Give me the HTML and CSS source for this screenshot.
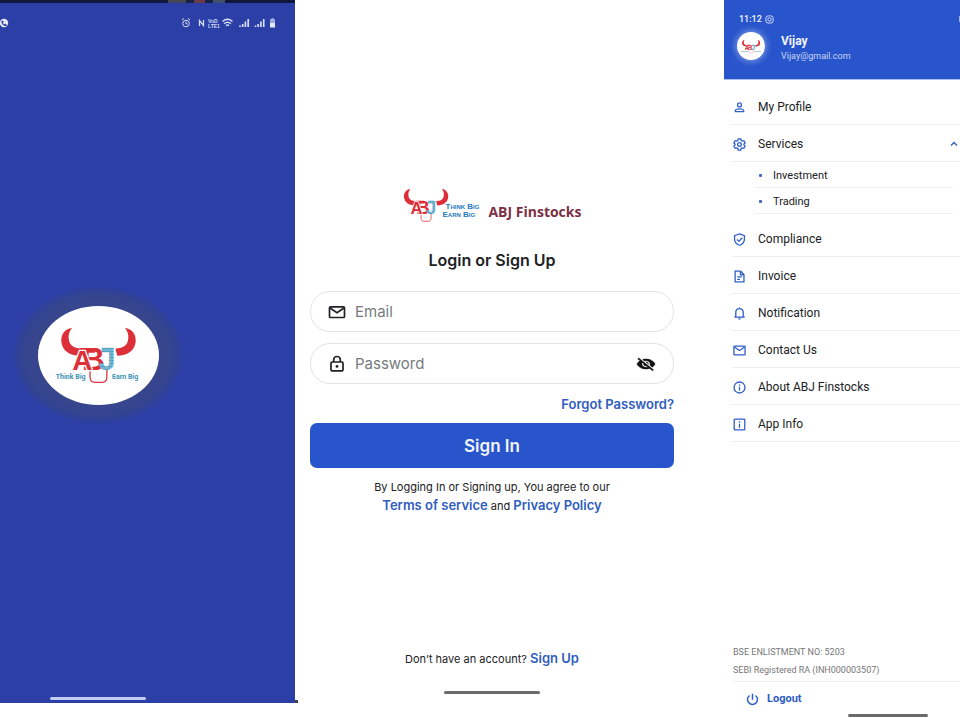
FILE: index.html
```
<!DOCTYPE html>
<html lang="en">
<head>
  <meta charset="UTF-8">
  <meta name="viewport" content="width=device-width, initial-scale=1.0">
  <title>ABJ Finstocks</title>
  <link rel="stylesheet" href="styles.css">
</head>
<body>

  <!-- Shared logo -->
  <svg class="defs" aria-hidden="true">
    <defs>
      <pattern id="hatch" width="9" height="9" patternUnits="userSpaceOnUse">
        <rect width="9" height="9" fill="#4a9cc0"/>
        <path d="M0 3h4l3 4M6 0v3" stroke="#c4e4ee" stroke-width="2" fill="none"/>
      </pattern>
      <symbol id="bull" viewBox="150 138 232 174">
        <path id="horn" fill="#dc2f38" d="M187 144C165 146 153 164 155 186C158 212 180 227 210 227L216 206C195 205 181 198 178 181C175 166 179 153 187 144Z"/>
        <use href="#horn" transform="translate(533 0) scale(-1 1)"/>
        <path d="M240 268C243 280 239 292 243 300C246 306 250 307 256 307H277C283 307 287 306 290 300C294 292 289 280 293 268" fill="none" stroke="#dc3a42" stroke-width="4"/>
        <path d="M212 204H256V218H208Z" fill="#dc2f38"/>
        <text class="mark mark-red" x="217" y="270" font-size="94">B</text>
        <text class="mark mark-cut" x="188" y="271" font-size="84">A</text>
        <path d="M276 203H306V217H276Z" fill="url(#hatch)"/>
        <text class="mark mark-blue" x="266" y="270" font-size="94">J</text>
      </symbol>
      <symbol id="logo" viewBox="130 138 270 174">
        <use href="#bull" x="150" y="138" width="232" height="174"/>
        <text class="tagline" x="138" y="298" font-size="21">Think Big</text>
        <text class="tagline" x="307" y="298" font-size="21">Earn Big</text>
      </symbol>
    </defs>
  </svg>

  <main class="screens">

    <!-- Splash -->
    <section class="splash">
      <div class="status">
        <svg class="status-call" viewBox="0 0 10 10"><circle cx="4" cy="5" r="4.200" fill="#e8ecfa"/><path d="M2 3c0 3 2 4.500 4.500 4.500M2 3l1.500 1M5 6l1.500 1.500" stroke="#2b3fa6" stroke-width="1.300" fill="none"/></svg>
        <svg class="status-icons" viewBox="0 0 96 12" fill="none" stroke="#d5dcf7">
          <circle cx="6" cy="6.500" r="3.300"/><path d="M6 4.500v2.300h1.600M2 3l2-1.600M10 3L8 1.400"/>
          <path d="M19.500 9V3.500l4 5V3" stroke-width="1.300"/>
          <g fill="#d5dcf7" stroke="none" font-family="Liberation Sans, sans-serif" font-weight="bold" font-size="5"><text x="28" y="5.500">VoD</text><text x="28" y="10.500">LTE1</text></g>
          <path d="M42.500 4.500c3-2.600 7-2.600 10 0M44 6.700c2.200-1.800 4.800-1.800 7 0M46 8.600c1-.8 2-.8 3 0" stroke-width="1.400"/>
          <path d="M60 10V8.500M62.700 10V7M65.400 10V4.500M68.200 10V2M75.500 10V8.500M78.200 10V7M80.900 10V4.500M83.700 10V2" stroke-width="1.700"/>
          <path d="M90 2.500h5v8h-5z" fill="#e4e9fb" stroke="none"/><path d="M91.500 1h2v2h-2z" fill="#a3afe6" stroke="none"/><path d="M90 2.500h5v3.500h-5z" fill="#9ba8e2" stroke="none"/>
        </svg>
      </div>
      <div class="splash-halo">
        <div class="splash-disc">
          <svg class="splash-logo" role="img" aria-label="ABJ Finstocks"><use href="#logo"/></svg>
        </div>
      </div>
      <div class="home-bar home-bar-light"></div>
    </section>

    <!-- Login -->
    <section class="login">
      <div class="brand">
        <svg class="brand-logo" aria-hidden="true"><use href="#bull"/></svg>
        <div class="brand-tag"><span>Think Big</span><span>Earn Big</span></div>
        <div class="brand-name">ABJ Finstocks</div>
      </div>
      <h1>Login or Sign Up</h1>
      <form class="login-form">
        <label class="field">
          <svg class="field-icon" viewBox="0 0 18 18" fill="none" stroke="#202124" stroke-width="1.700"><rect x="1.500" y="3.800" width="15" height="10.700" rx="1"/><path d="M2 5l7 4.700L16 5"/></svg>
          <input type="email" placeholder="Email" aria-label="Email">
        </label>
        <div class="field">
          <svg class="field-icon" viewBox="0 0 18 18" fill="none" stroke="#202124" stroke-width="1.700"><rect x="3" y="7" width="12" height="8.800" rx="1"/><path d="M5.700 7V4.800a3.300 3.300 0 0 1 6.600 0V7"/><circle cx="9" cy="11.400" r="1.400" fill="#202124" stroke="none"/></svg>
          <input type="password" placeholder="Password" aria-label="Password">
          <button type="button" class="toggle" aria-label="Show password">
            <svg viewBox="0 0 24 24" fill="#111" stroke="#111" stroke-width=".6" preserveAspectRatio="none"><path d="M12 7c2.760 0 5 2.240 5 5 0 .65-.13 1.260-.36 1.830l2.920 2.920c1.510-1.260 2.700-2.890 3.430-4.750-1.730-4.390-6-7.500-11-7.500-1.400 0-2.740.25-3.980.7l2.160 2.160C10.740 7.130 11.350 7 12 7zM2 4.270l2.280 2.280.46.46C3.080 8.300 1.780 10.020 1 12c1.730 4.390 6 7.500 11 7.500 1.550 0 3.030-.3 4.380-.84l.42.42L19.730 22 21 20.730 3.270 3 2 4.270zM7.530 9.800l1.550 1.550c-.05.21-.08.43-.08.65 0 1.660 1.340 3 3 3 .22 0 .44-.03.65-.08l1.550 1.550c-.67.33-1.410.53-2.200.53-2.760 0-5-2.240-5-5 0-.79.2-1.530.53-2.200zm4.310-.78l3.150 3.150.02-.16c0-1.660-1.340-3-3-3l-.17.01z"/></svg>
          </button>
        </div>
        <a class="forgot" href="#">Forgot Password?</a>
        <button type="submit" class="sign-in">Sign In</button>
      </form>
      <p class="terms">By Logging In or Signing up, You agree to our<br><a href="#">Terms of service</a> and <a href="#">Privacy Policy</a></p>
      <p class="sign-up">Don’t have an account? <a href="#">Sign Up</a></p>
      <div class="home-bar"></div>
    </section>

    <!-- Drawer -->
    <section class="drawer">
      <header class="drawer-head">
        <div class="clock">11:12
          <svg viewBox="0 0 10 10" fill="none" stroke="#dfe6fb"><rect x="1" y="1" width="8" height="8" rx="2.500"/><circle cx="5" cy="5" r="1.900"/></svg>
          <span class="clock-end"></span>
        </div>
        <div class="user">
          <div class="avatar"><svg aria-hidden="true"><use href="#logo"/></svg></div>
          <div>
            <div class="user-name">Vijay</div>
            <div class="user-mail">Vijay@gmail.com</div>
          </div>
        </div>
      </header>
      <nav class="menu">
        <a class="item" href="#"><svg viewBox="0 0 14 14"><circle cx="7" cy="4.200" r="2.100"/><path d="M2.500 11.500V10.600C2.500 9 5 8.400 7 8.400s4.500.6 4.500 2.200v.9z"/></svg>My Profile</a>
        <button type="button" class="item" aria-expanded="true"><svg viewBox="0 0 14 14"><path d="M5.600 1h2.800l.4 1.700 1.200.7 1.700-.5 1.400 2.300-1.300 1.200v1.200l1.300 1.200-1.400 2.300-1.700-.5-1.200.7-.4 1.700H5.600l-.4-1.700-1.200-.7-1.700.5L.9 8.800l1.300-1.200V6.400L.9 5.200l1.400-2.300 1.700.5 1.200-.7z"/><circle cx="7" cy="7" r="2"/></svg>Services<svg class="chevron" viewBox="0 0 8 8"><path d="M1 5.500l3-3 3 3"/></svg></button>
        <ul class="sub">
          <li><a href="#">Investment</a></li>
          <li><a href="#">Trading</a></li>
        </ul>
        <a class="item" href="#"><svg viewBox="0 0 14 14"><path d="M7 .9l5.300 2v3.700c0 3.200-2.200 5.500-5.300 6.600-3.100-1.100-5.300-3.400-5.300-6.600V2.900z"/><path d="M4.300 7l2 2 3.700-3.900"/></svg>Compliance</a>
        <a class="item" href="#"><svg viewBox="0 0 14 14"><path d="M2.300 1.300h6l3.500 3.500v8H2.300z"/><path d="M8 1.500v3.600h3.600M4.500 7.500h5M4.500 10h3"/></svg>Invoice</a>
        <a class="item" href="#"><svg viewBox="0 0 14 14"><path d="M1.300 11h11.400M3 11V6c0-2.600 1.800-4.300 4-4.300S11 3.400 11 6v5M7 .5v1.200M5.800 12.700h2.400"/></svg>Notification</a>
        <a class="item" href="#"><svg viewBox="0 0 14 14"><rect x="1" y="2.200" width="12" height="9.600" rx=".7"/><path d="M1.500 3.200L7 7l5.500-3.800"/></svg>Contact Us</a>
        <a class="item" href="#"><svg viewBox="0 0 14 14"><circle cx="7" cy="7" r="5.900"/><path d="M7 6.200v4M7 3.700v1.300"/></svg>About ABJ Finstocks</a>
        <a class="item" href="#"><svg viewBox="0 0 14 14"><rect x="1.300" y="1.300" width="11.400" height="11.400" rx=".5"/><path d="M7 6.200v4.200M7 3.500v1.500"/></svg>App Info</a>
      </nav>
      <footer class="drawer-foot">
        <p>BSE ENLISTMENT NO: 5203</p>
        <p>SEBI Registered RA (INH000003507)</p>
        <a class="logout" href="#"><svg viewBox="0 0 12 12"><path d="M6 .8v5.400M3.300 2.300a4.600 4.600 0 1 0 5.400 0"/></svg>Logout</a>
        <div class="home-bar home-bar-end"></div>
      </footer>
    </section>

  </main>

</body>
</html>
```
FILE: styles.css
```
* {
  box-sizing: border-box;
}

body {
  margin: 0;
  background-color: #fff;
  font-family: Roboto, "Liberation Sans", sans-serif;
  color: #202124;
}

a {
  color: #2f5dc0;
  text-decoration: none;
}

p {
  margin: 0;
}

button {
  font-family: inherit;
  border: none;
  background: none;
  cursor: pointer;
}

.defs {
  position: absolute;
  width: 0;
  height: 0;
}

.screens {
  display: grid;
  grid-template-columns: 295fr 429fr 236fr;
  min-height: 100vh;
}

/* Logo */
.mark {
  font-family: "Liberation Sans", sans-serif;
  font-weight: bold;
}

.mark-red {
  fill: #dc2f38;
}

.mark-cut {
  fill: #dc2f38;
  stroke: #fff;
  stroke-width: 8px;
  paint-order: stroke;
}

.mark-blue {
  fill: url(#hatch);
}

.tagline {
  font-family: Roboto, sans-serif;
  font-weight: bold;
  fill: #3f93b5;
}

.home-bar {
  width: 96px;
  height: 3px;
  border-radius: 2px;
  background-color: #6b6b6b;
}

/* Splash */
.splash {
  position: relative;
  display: flex;
  flex-direction: column;
  align-items: center;
  margin-bottom: 15px;
  padding: 0 99px 3px 0;
  border-top: 3px solid #10173c;
  background-color: #2b3fa6;
}

.splash::before {
  content: "";
  position: absolute;
  top: -3px;
  left: 168px;
  width: 57px;
  height: 3px;
  background: linear-gradient(90deg, #444757 18px, #172048 18px, #172048 26px, #6b3b4b 26px, #6b3b4b 37px, #172048 37px, #172048 45px, #41506d 45px);
}

.splash::after {
  content: "";
  position: absolute;
  right: -3px;
  bottom: 0;
  width: 3px;
  height: 3px;
  background-color: #444;
}

.status {
  display: flex;
  align-self: stretch;
  justify-content: space-between;
  align-items: center;
  margin-right: -80px;
  padding-top: 14px;
}

.status-call {
  width: 10px;
  height: 10px;
}

.status-icons {
  width: 96px;
  height: 12px;
}

.splash-halo {
  display: flex;
  align-items: center;
  justify-content: center;
  width: 168px;
  height: 136px;
  margin: auto 0;
  border-radius: 50%;
  background: radial-gradient(closest-side, #37468c 74%, #34448f 88%, #2d409d 100%);
}

.splash-disc {
  display: flex;
  align-items: center;
  justify-content: center;
  width: 121px;
  height: 99px;
  border-radius: 50%;
  background-color: #fff;
}

.splash-logo {
  width: 90px;
  height: 58px;
}

.home-bar-light {
  margin-top: 16px;
  background-color: #c3ccf5;
}

/* Login */
.login {
  display: flex;
  flex-direction: column;
  align-items: center;
  padding: 187px 50px 24px 15px;
  font-family: Inter, Roboto, sans-serif;
}

.brand {
  display: flex;
  align-items: center;
}

.brand-logo {
  width: 46px;
  height: 36px;
}

.brand-tag {
  display: flex;
  flex-direction: column;
  margin: 12px 9px 0 -6px;
  font-family: "Liberation Sans", sans-serif;
  font-size: 8px;
  line-height: 8px;
  font-weight: bold;
  font-variant: small-caps;
  color: #2679bd;
}

.brand-tag span:first-child {
  padding-left: 3px;
}

.brand-name {
  padding-top: 13px;
  font-family: "Open Sans", sans-serif;
  font-size: 14px;
  line-height: 16px;
  font-weight: bold;
  color: #7c2f45;
}

.login h1 {
  margin: 27px 0 21px;
  font-size: 16px;
  line-height: 20px;
  font-weight: 600;
}

.login-form {
  display: flex;
  flex-direction: column;
  align-self: stretch;
}

.field {
  display: flex;
  align-items: center;
  height: 41px;
  margin-bottom: 11px;
  padding: 0 17px;
  border: 1px solid #e2e2e2;
  border-radius: 20px;
}

.field-icon {
  width: 18px;
  height: 18px;
  flex: none;
}

.field input {
  flex: 1;
  min-width: 0;
  padding: 0 9px;
  border: none;
  outline: none;
  background: none;
  font-family: inherit;
  font-size: 15px;
}

.field input::placeholder {
  color: #757b7d;
}

.toggle {
  width: 20px;
  height: 16px;
  padding: 0;
}

.toggle svg {
  display: block;
  width: 20px;
  height: 16px;
}

.forgot {
  align-self: flex-end;
  font-size: 13px;
  line-height: 18px;
  font-weight: 600;
}

.sign-in {
  height: 45px;
  margin-top: 10px;
  border-radius: 7px;
  background-color: #2855cc;
  color: #f2f5ff;
  font-size: 17px;
  font-weight: 600;
}

.terms {
  margin-top: 10px;
  font-size: 11px;
  line-height: 18px;
  text-align: center;
}

.terms a,
.sign-up a {
  font-size: 13px;
  font-weight: 600;
}

.sign-up {
  margin: auto 0 23px;
  font-size: 11px;
  line-height: 18px;
}

/* Drawer */
.drawer {
  display: flex;
  flex-direction: column;
  overflow: hidden;
}

.drawer-head {
  height: 80px;
  padding: 14px 0 0 9px;
  border-bottom: 1px solid #a9bdec;
  background-color: #2855cc;
  color: #f2f5ff;
}

.clock {
  display: flex;
  align-items: center;
  gap: 3px;
  padding-left: 6px;
  font-size: 9px;
  line-height: 10px;
  font-weight: 500;
}

.clock svg {
  width: 9px;
  height: 9px;
}

.clock-end {
  width: 1px;
  height: 6px;
  margin-left: auto;
  background-color: #9fb4ee;
}

.user {
  display: flex;
  align-items: center;
  gap: 10px;
  padding-top: 4px;
}

.avatar {
  display: flex;
  align-items: center;
  justify-content: center;
  width: 28px;
  height: 28px;
  margin: 4px;
  border-radius: 50%;
  background-color: #fff;
  box-shadow: 0 0 0 2px #5277d8, 0 0 0 4px #3e67d2, 0 0 0 6px #325dce;
}

.avatar svg {
  width: 22px;
  height: 15px;
}

.user > div:last-child {
  padding: 5px 0 0 2px;
}

.user-name {
  font-size: 12px;
  line-height: 15px;
  font-weight: bold;
}

.user-mail {
  font-size: 9px;
  line-height: 15px;
  color: #c9d5f5;
}

.menu {
  padding: 8px 0 0 8px;
}

.item {
  display: flex;
  align-items: center;
  gap: 12px;
  width: 100%;
  height: 37px;
  padding: 2px 2px 0 1px;
  border-bottom: 1px solid #efefef;
  color: #202124;
  font-size: 12px;
  text-align: left;
}

.item svg,
.logout svg {
  width: 13px;
  height: 13px;
  fill: none;
  stroke: #2f5fc8;
  stroke-width: 1.4px;
}

.item .chevron {
  width: 8px;
  height: 8px;
  margin-left: auto;
}

.sub {
  margin: 0 7px 6px 23px;
  padding: 0;
  list-style: none;
}

.sub a {
  display: flex;
  align-items: center;
  gap: 11px;
  height: 26px;
  padding: 2px 0 0 4px;
  border-bottom: 1px solid #efefef;
  color: #202124;
  font-size: 11px;
}

.sub a::before {
  content: "";
  width: 3px;
  height: 3px;
  border-radius: 1px;
  background-color: #3f68c8;
}

.drawer-foot {
  margin-top: auto;
  padding: 0 0 1px 9px;
  font-size: 9px;
  line-height: 18px;
  color: #767676;
}

.logout {
  display: flex;
  align-items: center;
  gap: 8px;
  height: 33px;
  margin-top: 2px;
  padding: 2px 0 0 13px;
  border-top: 1px solid #efefef;
  font-size: 11px;
  font-weight: bold;
}

.home-bar-end {
  width: 80px;
  margin: 0 32px 0 auto;
}
```
